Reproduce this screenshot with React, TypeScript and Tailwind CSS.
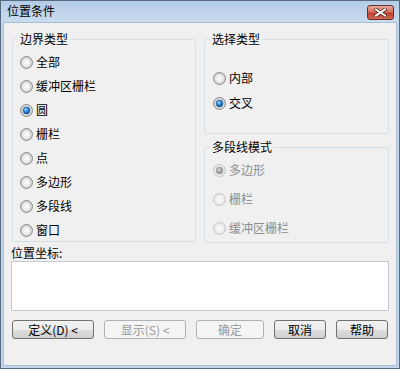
import React from "react";

const FONT = "font-['Noto_Sans_CJK_SC','Noto_Sans',sans-serif]";

function Radio({ checked, disabled }: { checked?: boolean; disabled?: boolean }) {
  return (
    <svg width="13" height="13" viewBox="0 0 13 13" className="shrink-0">
      <defs>
        <radialGradient id="rad-en" cx="50%" cy="50%" r="50%">
          <stop offset="0%" stopColor="#fbfbfb" />
          <stop offset="55%" stopColor="#ececec" />
          <stop offset="100%" stopColor="#c4c4c4" />
        </radialGradient>
        <radialGradient id="rad-dis" cx="50%" cy="50%" r="50%">
          <stop offset="0%" stopColor="#f8f8f8" />
          <stop offset="60%" stopColor="#f1f1f1" />
          <stop offset="100%" stopColor="#dedede" />
        </radialGradient>
        <radialGradient id="rad-dot" cx="40%" cy="35%" r="70%">
          <stop offset="0%" stopColor="#9ddcff" />
          <stop offset="45%" stopColor="#2f8fe0" />
          <stop offset="100%" stopColor="#0b3f86" />
        </radialGradient>
        <radialGradient id="rad-dotd" cx="40%" cy="35%" r="70%">
          <stop offset="0%" stopColor="#d0d0d0" />
          <stop offset="100%" stopColor="#8a8a8a" />
        </radialGradient>
      </defs>
      <circle
        cx="6.5"
        cy="6.5"
        r="6"
        fill={disabled ? "url(#rad-dis)" : "url(#rad-en)"}
        stroke={disabled ? "#c9c9c9" : "#8e8f8f"}
        strokeWidth="1"
      />
      {checked && (
        <circle
          cx="6.5"
          cy="6.5"
          r="3.4"
          fill={disabled ? "url(#rad-dotd)" : "url(#rad-dot)"}
          stroke={disabled ? "#8f8f8f" : "#1a4c8e"}
          strokeWidth="0.6"
        />
      )}
    </svg>
  );
}

function RadioRow({
  label,
  checked,
  disabled,
}: {
  label: string;
  checked?: boolean;
  disabled?: boolean;
}) {
  return (
    <div className="flex h-[20px] items-center gap-[3px]">
      <Radio checked={checked} disabled={disabled} />
      <span className={`text-[12px] leading-[16px] ${disabled ? "text-[#8d8d8d]" : "text-black"}`}>
        {label}
      </span>
    </div>
  );
}

function Group({
  title,
  className,
  children,
}: {
  title: string;
  className: string;
  children: React.ReactNode;
}) {
  return (
    <div className={`relative rounded-[3px] border border-[#d5dfe5] ${className}`}>
      <div className="absolute -top-[8px] left-[5px] bg-[#f0f0f0] px-[2px] text-[12px] leading-[14px] text-black">
        {title}
      </div>
      {children}
    </div>
  );
}

function Button({ label, width, disabled }: { label: string; width: string; disabled?: boolean }) {
  return (
    <div
      className={`flex h-[19px] items-center justify-center rounded-[3px] border text-[12px] leading-[16px] ${width} ${
        disabled
          ? "border-[#adb2b5] bg-[#f4f4f4] text-[#9a9a9a]"
          : "border-[#707070] bg-[linear-gradient(to_bottom,#f2f2f2_0%,#ebebeb_50%,#dddddd_51%,#cfcfcf_100%)] text-black"
      }`}
    >
      {label}
    </div>
  );
}

export default function App() {
  return (
    <div
      className={`${FONT} flex h-[369px] w-[400px] flex-col border border-[#586a80] bg-[#c2d6ec]`}
    >
      {/* title bar */}
      <div className="flex h-[21px] items-start justify-between bg-[linear-gradient(to_bottom,#b3cbe6,#cadcef)] pl-[6px] pr-[5px]">
        <span className="mt-[2px] text-[12px] leading-[16px] text-black">位置条件</span>
        <div className="mt-[4px] flex h-[15px] w-[27px] items-center justify-center rounded-[3px] border border-[#6e2c28] bg-[linear-gradient(to_bottom,#e9a99b_0%,#d36f5f_45%,#c2402f_55%,#cf6b55_100%)]">
          <svg width="13" height="9" viewBox="0 0 13 9">
            <path d="M2 1.5 L11 7.5 M11 1.5 L2 7.5" stroke="#5a2520" strokeWidth="3.6" strokeLinecap="square" />
            <path d="M2 1.5 L11 7.5 M11 1.5 L2 7.5" stroke="#ffffff" strokeWidth="2" strokeLinecap="square" />
          </svg>
        </div>
      </div>

      {/* content */}
      <div className="mx-[2px] mb-[2px] flex h-[344px] flex-col border border-[#a9bdd3] bg-[#f0f0f0]">
        <div className="mt-[16px] flex">
          <Group title="边界类型" className="ml-[8px] h-[203px] w-[184px]">
            <div className="flex flex-col gap-[4px] pl-[7px] pt-[12px]">
              <RadioRow label="全部" />
              <RadioRow label="缓冲区栅栏" />
              <RadioRow label="圆" checked />
              <RadioRow label="栅栏" />
              <RadioRow label="点" />
              <RadioRow label="多边形" />
              <RadioRow label="多段线" />
              <RadioRow label="窗口" />
            </div>
          </Group>
          <div className="ml-[8px] flex w-[185px] flex-col">
            <Group title="选择类型" className="h-[95px]">
              <div className="flex flex-col gap-[5px] pl-[8px] pt-[28px]">
                <RadioRow label="内部" />
                <RadioRow label="交叉" checked />
              </div>
            </Group>
            <Group title="多段线模式" className="mt-[13px] h-[96px]">
              <div className="flex flex-col gap-[9px] pl-[8px] pt-[12px]">
                <RadioRow label="多边形" checked disabled />
                <RadioRow label="栅栏" disabled />
                <RadioRow label="缓冲区栅栏" disabled />
              </div>
            </Group>
          </div>
        </div>

        <div className="ml-[7px] mt-[2px] text-[12px] leading-[16px] text-black">位置坐标:</div>
        <textarea
          readOnly
          className="ml-[7px] h-[50px] w-[378px] resize-none border border-[#c6cad0] bg-white outline-none"
        />

        <div className="ml-[8px] mt-[9px] flex gap-[10px]">
          <Button label="定义(D) <" width="w-[82px]" />
          <Button label="显示(S) <" width="w-[82px]" disabled />
          <Button label="确定" width="w-[68px]" disabled />
          <Button label="取消" width="w-[52px]" />
          <Button label="帮助" width="w-[52px]" />
        </div>
      </div>
    </div>
  );
}
